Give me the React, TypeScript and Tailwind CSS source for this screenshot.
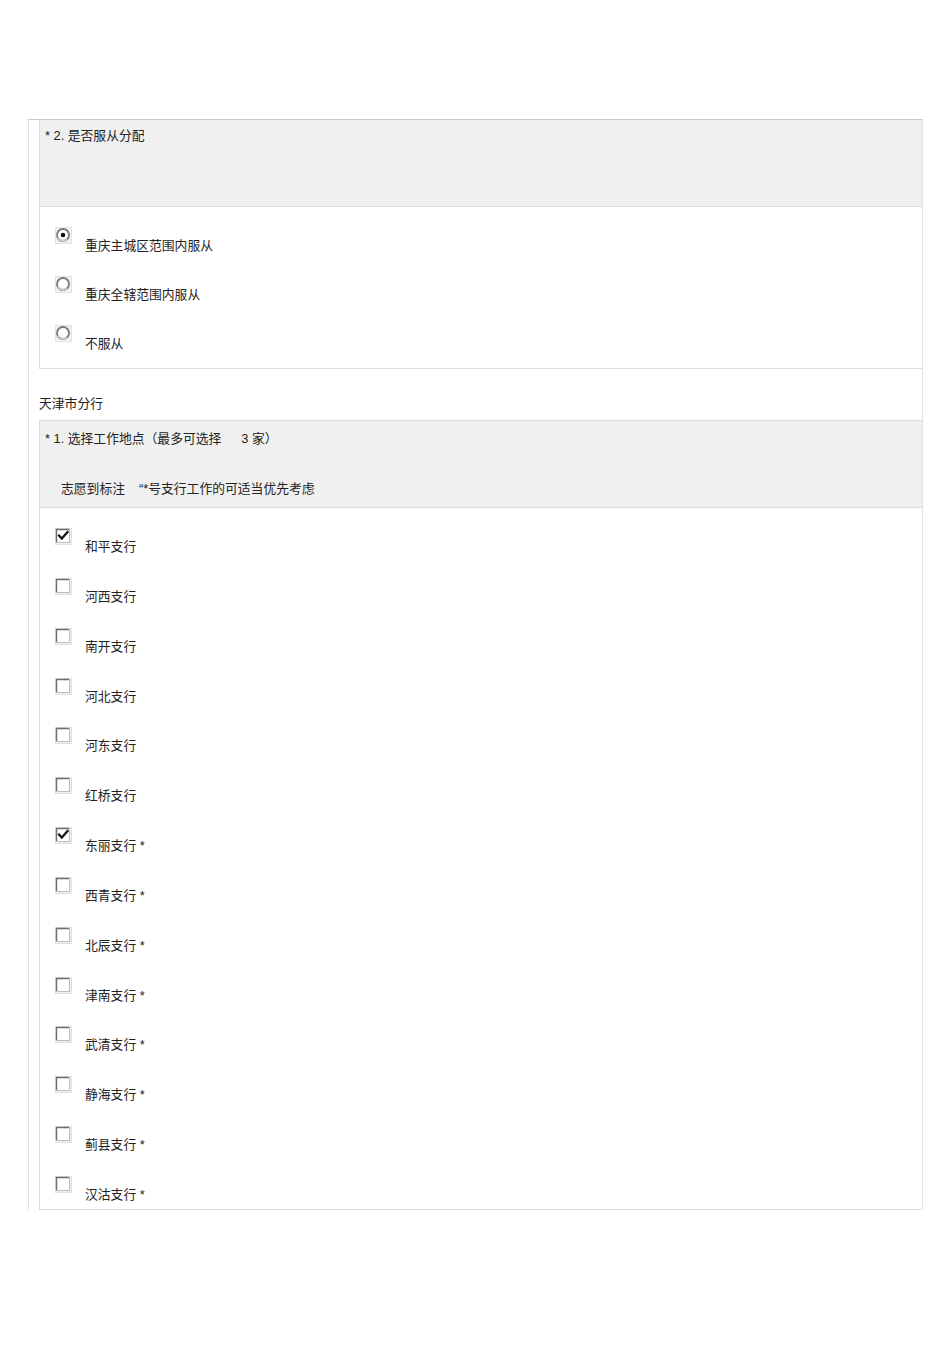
import React from "react";

const font = { fontFamily: '"Liberation Sans", Arial, "Noto Sans CJK SC", sans-serif' };

function Radio({ checked }: { checked?: boolean }) {
  return (
    <svg width="17" height="17" viewBox="0 0 17 17" className="shrink-0">
      <rect x="0.5" y="0.5" width="16" height="16" fill="#f2f2f2" stroke="#e2e2e2" />
      <circle cx="8" cy="8" r="6" fill="#ffffff" stroke="#7a7a7a" strokeWidth="1.8" />
      <path d="M3 10.5 A6 6 0 0 0 12 12.5" stroke="#cfcfcf" strokeWidth="1.8" fill="none" />
      {checked && <circle cx="8" cy="8" r="2.3" fill="#111" />}
    </svg>
  );
}

function Check({ checked }: { checked?: boolean }) {
  return (
    <svg width="17" height="17" viewBox="0 0 17 17" className="shrink-0">
      <rect x="0.5" y="0.5" width="16" height="16" fill="#f0f0f0" stroke="#e0e0e0" />
      <rect x="1.5" y="1.5" width="13" height="13" fill="#ffffff" stroke="#bdbdbd" />
      <path d="M1.5 14 V1.5 H14" stroke="#6e6e6e" strokeWidth="1.4" fill="none" />
      {checked && (
        <path d="M4 7.5 L6.8 10.5 L12.5 4" stroke="#111" strokeWidth="2.2" fill="none" strokeLinecap="square" />
      )}
    </svg>
  );
}

const radios = [
  { label: "重庆主城区范围内服从", checked: true },
  { label: "重庆全辖范围内服从" },
  { label: "不服从" },
];

const branches: { label: string; checked?: boolean }[] = [
  { label: "和平支行", checked: true },
  { label: "河西支行" },
  { label: "南开支行" },
  { label: "河北支行" },
  { label: "河东支行" },
  { label: "红桥支行" },
  { label: "东丽支行 *", checked: true },
  { label: "西青支行 *" },
  { label: "北辰支行 *" },
  { label: "津南支行 *" },
  { label: "武清支行 *" },
  { label: "静海支行 *" },
  { label: "蓟县支行 *" },
  { label: "汉沽支行 *" },
];

export default function App() {
  return (
    <div className="min-h-[1345px] w-[950px] bg-white text-[12.8px] leading-[16px] text-[#222]" style={font}>
      <div className="pt-[119px] pl-[28px]">
        <div className="w-[895px] border-l border-r border-t border-l-[#e2e2e2] border-r-[#e2e2e2] border-t-[#c8c8c8] pl-[10px]">
          {/* Question 2 */}
          <div className="border-l border-b border-[#dcdcdc]">
            <div className="h-[87px] border-b border-[#dcdcdc] bg-[#f0f0f0] px-[5px] pt-[8px]">* 2. 是否服从分配</div>
            <div className="flex flex-col gap-[22px] pt-[20px] pb-[16px]">
              {radios.map((r) => (
                <div key={r.label} className="flex items-start">
                  <div className="ml-[15px]">
                    <Radio checked={r.checked} />
                  </div>
                  <div className="ml-[13px] mt-[11px]">{r.label}</div>
                </div>
              ))}
            </div>
          </div>

          <div className="pt-[27px] pb-[8px]">天津市分行</div>

          {/* Question 1 */}
          <div className="border-l border-b border-t border-[#dcdcdc]">
            <div className="h-[87px] border-b border-[#dcdcdc] bg-[#f0f0f0] px-[5px] pt-[10px]">
              <div>
                * 1. 选择工作地点（最多可选择<span className="ml-[20px]">3 家）</span>
              </div>
              <div className="ml-[16px] mt-[34px]">
                志愿到标注<span className="ml-[14px]">“*号支行工作的可适当优先考虑</span>
              </div>
            </div>
            <div className="flex flex-col gap-[22.85px] pt-[20px] pb-[6px]">
              {branches.map((b) => (
                <div key={b.label} className="flex items-start">
                  <div className="ml-[15px]">
                    <Check checked={b.checked} />
                  </div>
                  <div className="ml-[13px] mt-[11px]">{b.label}</div>
                </div>
              ))}
            </div>
          </div>
        </div>
      </div>
    </div>
  );
}
